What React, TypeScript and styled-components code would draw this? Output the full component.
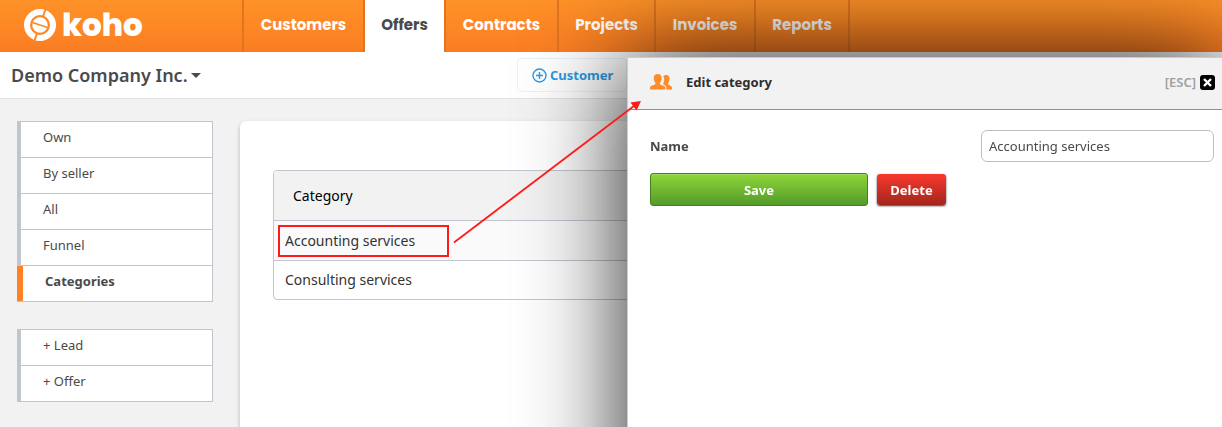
import React from "react";
import styled, { createGlobalStyle, css } from "styled-components";

const GlobalStyle = createGlobalStyle`
  *, *::before, *::after { box-sizing: border-box; }
  body {
    margin: 0;
    background: #f2f2f2;
    color: #4a4a4a;
    font-family: "Noto Sans", sans-serif;
    font-size: 13px;
    line-height: 18px;
  }
  a { color: inherit; text-decoration: none; }
  button, input { font: inherit; }
`;

const Page = styled.div`
  position: relative;
  display: flex;
  flex-direction: column;
  min-height: 100vh;
  overflow: hidden;
`;

const TopBar = styled.header`
  display: flex;
  height: 52px;
  background: linear-gradient(#ff9228, #fb7d22);
`;

const Brand = styled.a`
  display: flex;
  align-items: center;
  gap: 5px;
  width: 242px;
  padding: 0 0 2px 23px;
  color: #fff;
`;

const BrandName = styled.span`
  font-family: Poppins, Inter, sans-serif;
  font-size: 31px;
  font-weight: 800;
  line-height: 50px;
`;

const Nav = styled.nav`
  display: flex;
  border-left: 2px solid #e07420;
`;

const NavLink = styled.a<{ $width: number; $active?: boolean }>`
  width: ${(p) => p.$width}px;
  border-right: 2px solid #e07420;
  color: #fff;
  font-family: Poppins, Inter, sans-serif;
  font-size: 15px;
  font-weight: 700;
  line-height: 50px;
  text-align: center;
  ${(p) => p.$active && css`
    background: #fff;
    color: #4a4a4a;
  `}
`;

const SubBar = styled.div`
  display: flex;
  align-items: center;
  height: 47px;
  padding-left: 11px;
  background: #fff;
  border-bottom: 1px solid #e2e2e2;
`;

const CompanyButton = styled.button`
  display: flex;
  align-items: center;
  gap: 3px;
  width: 506px;
  padding: 0;
  border: 0;
  background: none;
  color: #4a4a4a;
  font-size: 18px;
  font-weight: 600;
  line-height: 24px;
`;

const AddButton = styled.button`
  display: flex;
  align-items: center;
  gap: 3px;
  width: 110px;
  height: 34px;
  padding: 0 0 0 14px;
  border: 1px solid #e8f3f8;
  border-radius: 4px;
  background: #fff;
  color: #2a9ae4;
  font-weight: 700;
`;

const Main = styled.main`
  display: flex;
  flex: 1;
  gap: 27px;
  padding: 22px 0 0 17px;
`;

const Sidebar = styled.aside`
  display: flex;
  flex-direction: column;
  gap: 27px;
  flex: 0 0 196px;
`;

const SideList = styled.ul`
  margin: 0;
  padding: 0;
  list-style: none;
  border: solid #c0c5ce;
  border-width: 1px 1px 0 0;
`;

const SideLink = styled.a<{ $active?: boolean }>`
  display: block;
  height: 36px;
  padding: 6px 0 0 26px;
  border-bottom: 1px solid #c0c5ce;
  background: #fff;
  box-shadow: inset 4px 0 #c0c5ce;
  ${(p) => p.$active && css`
    padding-left: 28px;
    box-shadow: inset 6px 0 #ff8324;
    font-weight: 700;
  `}
`;

const Card = styled.section`
  flex: 1;
  padding: 49px 33px 0;
  border-radius: 6px 0 0 0;
  background: #fff;
  box-shadow: 0 2px 4px rgba(0, 0, 0, 0.25);
`;

const Table = styled.table`
  width: 100%;
  border: 1px solid #c0c5ce;
  border-radius: 4px;
  border-spacing: 0;
  overflow: hidden;
  color: #333;
  font-size: 14px;
  line-height: 20px;

  th {
    height: 49px;
    padding: 0 19px;
    background: #f2f2f2;
    color: #000;
    font-weight: 400;
    text-align: left;
  }
  td {
    height: 39px;
    padding: 0 4px;
    border-top: 1px solid #c0c5ce;
  }
  tbody tr:first-child td { height: 40px; background: #fafafa; }
`;

const CellText = styled.span<{ $marked?: boolean }>`
  display: block;
  width: 171px;
  padding: 4px 5px;
  border: 2px solid ${(p) => (p.$marked ? "#ff1a1a" : "transparent")};
`;

const Drawer = styled.section`
  position: fixed;
  top: 57px;
  right: 0;
  width: min(595px, 100%);
  height: 150vh;
  background: #fff;
  border: solid #ccc;
  border-width: 1px 0 0 1px;
  border-radius: 2px 0 0 0;
  box-shadow: 0 0 100px rgba(0, 0, 0, 0.87);
`;

const DrawerHeader = styled.header`
  display: flex;
  align-items: center;
  height: 52px;
  padding: 0 7px 3px 22px;
  border-bottom: 1px solid #909090;
  background: #f2f2f2;
`;

const DrawerTitle = styled.h2`
  flex: 1;
  margin: 0 0 0 14px;
  color: #2e2e2e;
  font-size: 13px;
  font-weight: 700;
`;

const CloseButton = styled.button`
  display: flex;
  align-items: center;
  gap: 4px;
  padding: 0;
  border: 0;
  background: none;
  color: #a0a0a0;
  font-weight: 600;
`;

const Form = styled.form`
  display: flex;
  flex-direction: column;
  gap: 11px;
  padding: 20px 8px 0 22px;
`;

const Field = styled.label`
  display: flex;
  align-items: center;
  justify-content: space-between;
  font-weight: 700;
`;

const TextInput = styled.input`
  width: 233px;
  height: 32px;
  padding: 0 7px;
  border: 1px solid #bdbdbd;
  border-radius: 6px;
  background: #fff;
  color: #4a4a4a;
  font-weight: 400;
`;

const Actions = styled.div`
  display: flex;
  align-items: center;
  gap: 9px;
`;

const ActionButton = styled.button`
  height: 33px;
  padding: 0;
  border-radius: 3px;
  color: #fff;
  font-weight: 700;
`;

const SaveButton = styled(ActionButton)`
  width: 218px;
  border: 1px solid #43811f;
  background: linear-gradient(#8fd63a, #539b2a);
  box-shadow: inset 0 1px #a3dc5c;
`;

const DeleteButton = styled(ActionButton)`
  width: 69px;
  height: 31px;
  border: 0;
  background: linear-gradient(#f8382e, #a3261d);
  box-shadow: 0 1px 2px rgba(0, 0, 0, 0.8);
`;

const Arrow = styled.svg`
  position: fixed;
  top: 98px;
  left: 450px;
  pointer-events: none;
`;

const tabs = [
  { label: "Customers", width: 121 },
  { label: "Offers", width: 81, active: true },
  { label: "Contracts", width: 113 },
  { label: "Projects", width: 97 },
  { label: "Invoices", width: 100 },
  { label: "Reports", width: 94 },
];

const views = ["Own", "By seller", "All", "Funnel", "Categories"];
const shortcuts = ["+ Lead", "+ Offer"];
const categories = ["Accounting services", "Consulting services"];

function LogoMark() {
  return (
    <svg width="34" height="34" viewBox="0 0 34 34" fill="none" aria-hidden="true">
      <circle cx="17" cy="17" r="13" stroke="#fff" strokeWidth="6" />
      <path d="M19.500 10L23 0M11 34L14.500 24" stroke="#fe8926" strokeWidth="2" />
      <circle cx="17" cy="17" r="8.600" fill="#fff" stroke="#fe8926" strokeWidth="1.800" />
      <path d="M9.500 14.500L24.500 19.500" stroke="#fe8926" strokeWidth="1.800" />
    </svg>
  );
}

function PeopleIcon() {
  return (
    <svg width="22" height="16" viewBox="0 0 22 16" fill="#ff8b2b" aria-hidden="true">
      <path d="M13.200 2.500C13.700 1.500 14.900 1 16.200 1C18.800 1 19.700 2.800 19.500 5C19.400 6.800 18.800 8 18.200 8.800V10.400C19 11.300 22 11.500 22 13.800V15.500H16.300V14C16.300 12.200 15 11.200 13.300 10.600V9.300C13.900 8.300 14.300 6.500 14.200 5C14.200 4 13.800 3.200 13.200 2.500Z" />
      <path d="M7.700 0C10.600 0 11.800 1.800 11.600 4.500C11.500 6.500 10.700 8 10 8.800V10.300C10.600 11.300 15.300 11.300 15.300 14V15.500H0V14C0 11.300 4.800 11.300 5.400 10.300V8.800C4.700 8 3.900 6.500 3.800 4.500C3.600 1.800 4.800 0 7.700 0Z" />
    </svg>
  );
}

export default function App() {
  return (
    <>
      <GlobalStyle />
      <Page>
        <TopBar>
          <Brand href="#">
            <LogoMark />
            <BrandName>koho</BrandName>
          </Brand>
          <Nav>
            {tabs.map((t) => (
              <NavLink key={t.label} href="#" $width={t.width} $active={t.active}>
                {t.label}
              </NavLink>
            ))}
          </Nav>
        </TopBar>
        <SubBar>
          <CompanyButton type="button">
            Demo Company Inc.
            <svg width="10" height="5" viewBox="0 0 10 5" fill="#4a4a4a" aria-hidden="true">
              <path d="M0 0H10L5 5Z" />
            </svg>
          </CompanyButton>
          <AddButton type="button">
            <svg width="15" height="15" viewBox="0 0 15 15" fill="none" stroke="#2a9ae4" strokeWidth="1.400" aria-hidden="true">
              <circle cx="7.500" cy="7.500" r="6.500" />
              <path d="M7.500 4V11M4 7.500H11" />
            </svg>
            Customer
          </AddButton>
        </SubBar>
        <Main>
          <Sidebar>
            <SideList>
              {views.map((v) => (
                <li key={v}>
                  <SideLink href="#" $active={v === "Categories"}>{v}</SideLink>
                </li>
              ))}
            </SideList>
            <SideList>
              {shortcuts.map((s) => (
                <li key={s}>
                  <SideLink href="#">{s}</SideLink>
                </li>
              ))}
            </SideList>
          </Sidebar>
          <Card>
            <Table>
              <thead>
                <tr><th scope="col">Category</th></tr>
              </thead>
              <tbody>
                {categories.map((c, i) => (
                  <tr key={c}>
                    <td><CellText $marked={i === 0}>{c}</CellText></td>
                  </tr>
                ))}
              </tbody>
            </Table>
          </Card>
        </Main>
      </Page>
      <Drawer>
        <DrawerHeader>
          <PeopleIcon />
          <DrawerTitle>Edit category</DrawerTitle>
          <CloseButton type="button">
            [ESC]
            <svg width="15" height="15" viewBox="0 0 15 15" aria-hidden="true">
              <rect width="15" height="15" rx="3" fill="#000" />
              <path d="M4 4L11 11M11 4L4 11" stroke="#fff" strokeWidth="2.400" />
            </svg>
          </CloseButton>
        </DrawerHeader>
        <Form onSubmit={(e) => e.preventDefault()}>
          <Field>
            Name
            <TextInput type="text" defaultValue="Accounting services" />
          </Field>
          <Actions>
            <SaveButton type="submit">Save</SaveButton>
            <DeleteButton type="button">Delete</DeleteButton>
          </Actions>
        </Form>
      </Drawer>
      <Arrow width="194" height="148" viewBox="0 0 194 148" aria-hidden="true">
        <path d="M4 144.500L184 8" stroke="#ff1a1a" strokeWidth="1.800" />
        <path d="M191 3L180.500 4.500L186.500 12.500Z" fill="#ff1a1a" />
      </Arrow>
    </>
  );
}
